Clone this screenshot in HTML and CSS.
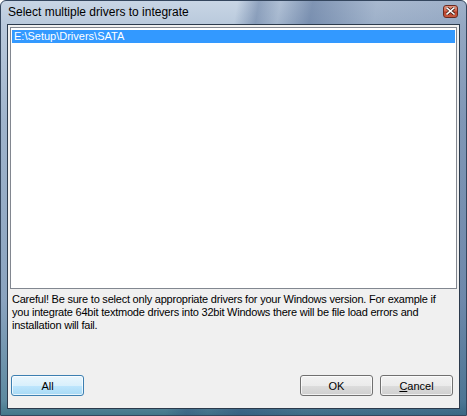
FILE: index.html
```html
<!DOCTYPE html>
<html>
<head>
<meta charset="utf-8">
<link rel="stylesheet" href="styles.css">
</head>
<body>
<div class="window">
  <div class="titlebar">
    <span class="title">Select multiple drivers to integrate</span>
    <span class="close"><svg width="9" height="8" viewBox="0 0 9 8"><path d="M1 1 L8 7 M8 1 L1 7" stroke="#3a1a14" stroke-width="3" stroke-linecap="square"/><path d="M1 1 L8 7 M8 1 L1 7" stroke="#ffffff" stroke-width="1.6" stroke-linecap="square"/></svg></span>
  </div>
  <div class="client">
    <div class="listbox">
      <div class="item selected">E:\Setup\Drivers\SATA</div>
    </div>
    <p class="note">Careful! Be sure to select only appropriate drivers for your Windows version. For example if<br>you integrate 64bit textmode drivers into 32bit Windows there will be file load errors and<br>installation will fail.</p>
    <div class="buttons">
      <button class="btn default">All</button>
      <span class="spacer"></span>
      <button class="btn">OK</button>
      <button class="btn"><u>C</u>ancel</button>
    </div>
  </div>
</div>
</body>
</html>
```
FILE: styles.css
```css
html, body {
  margin: 0;
  padding: 0;
  width: 467px;
  height: 416px;
  overflow: hidden;
  background: #ffffff;
}
.window {
  box-sizing: border-box;
  width: 467px;
  height: 416px;
  border: 1px solid #34465e;
  border-radius: 6px 6px 0 0;
  background:
    linear-gradient(100deg, rgba(255,255,255,0) 0%, rgba(255,255,255,0) 44%, rgba(40,70,120,0.35) 48%, rgba(40,70,120,0.15) 52%, rgba(40,70,120,0.45) 58%, rgba(40,70,120,0.2) 70%, rgba(40,70,120,0.3) 100%),
    linear-gradient(180deg, #c8d5e5 0px, #b9c9dc 24px, #9fb4cc 120px, #8aa3bf 300px, #5d8aa0 400px, #3f7486 416px);
  display: flex;
  flex-direction: column;
  font-family: "Liberation Sans", Arial, sans-serif;
}
.titlebar {
  height: 23px;
  display: flex;
  align-items: center;
  padding: 0 7px 0 7px;
  position: relative;
}
.title {
  font-size: 12px;
  color: #000;
  flex: 1;
  margin-top: -1px;
}
.close {
  width: 15px;
  height: 13px;
  box-sizing: border-box;
  border: 1px solid #6b2a20;
  border-radius: 3px;
  background: linear-gradient(180deg, #e39480 0%, #d0644c 45%, #b8402a 55%, #c85a40 100%);
  display: flex;
  align-items: center;
  justify-content: center;
  margin-top: -3px;
  margin-right: 1px;
}
.client {
  flex: 1;
  margin: 0 6px 6px 6px;
  border: 1px solid #2b3a4c;
  background: #f0f0f0;
  display: flex;
  flex-direction: column;
  padding: 2px 2px 12px 2px;
}
.listbox {
  box-sizing: border-box;
  height: 262px;
  border: 1px solid #828790;
  background: #fff;
  padding: 2px 1px;
}
.item {
  font-size: 11px;
  line-height: 13px;
  padding-left: 2px;
  color: #000;
}
.item.selected {
  background: #3399ff;
  color: #fff;
}
.note {
  margin: 4px 0 0 2px;
  font-size: 11px;
  line-height: 13px;
  color: #000;
  letter-spacing: -0.22px;
}
.buttons {
  margin-top: auto;
  display: flex;
  align-items: center;
  padding: 0 4px 0 1px;
  gap: 7px;
}
.spacer {
  flex: 1;
}
.btn {
  box-sizing: border-box;
  width: 73px;
  height: 21px;
  border: 1px solid #707070;
  border-radius: 3px;
  background: linear-gradient(180deg, #f2f2f2 0%, #ebebeb 50%, #dddddd 51%, #cfcfcf 100%);
  font-family: "Liberation Sans", Arial, sans-serif;
  font-size: 11px;
  color: #000;
  padding: 0;
  box-shadow: inset 0 0 0 1px rgba(255,255,255,0.7);
}
.btn.default {
  border-color: #3c7fb1;
  background: linear-gradient(180deg, #eaf6fd 0%, #d9f0fc 50%, #bee6fd 51%, #a7d9f5 100%);
}
.btn u {
  text-decoration: underline;
}
```
